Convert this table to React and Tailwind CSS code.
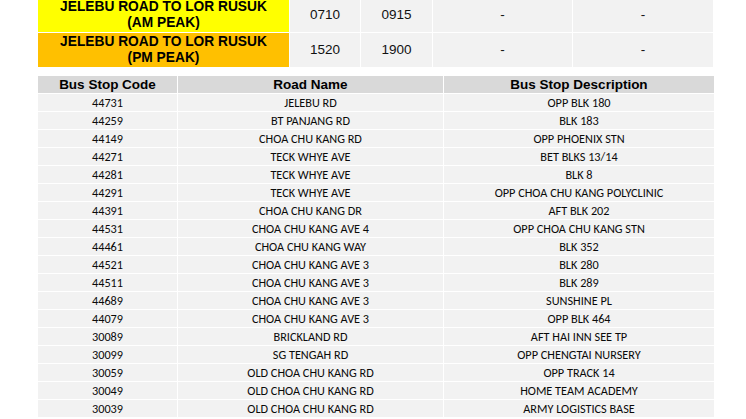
import React from "react";

const rows = [
  ["44731", "JELEBU RD", "OPP BLK 180"],
  ["44259", "BT PANJANG RD", "BLK 183"],
  ["44149", "CHOA CHU KANG RD", "OPP PHOENIX STN"],
  ["44271", "TECK WHYE AVE", "BET BLKS 13/14"],
  ["44281", "TECK WHYE AVE", "BLK 8"],
  ["44291", "TECK WHYE AVE", "OPP CHOA CHU KANG POLYCLINIC"],
  ["44391", "CHOA CHU KANG DR", "AFT BLK 202"],
  ["44531", "CHOA CHU KANG AVE 4", "OPP CHOA CHU KANG STN"],
  ["44461", "CHOA CHU KANG WAY", "BLK 352"],
  ["44521", "CHOA CHU KANG AVE 3", "BLK 280"],
  ["44511", "CHOA CHU KANG AVE 3", "BLK 289"],
  ["44689", "CHOA CHU KANG AVE 3", "SUNSHINE PL"],
  ["44079", "CHOA CHU KANG AVE 3", "OPP BLK 464"],
  ["30089", "BRICKLAND RD", "AFT HAI INN SEE TP"],
  ["30099", "SG TENGAH RD", "OPP CHENGTAI NURSERY"],
  ["30059", "OLD CHOA CHU KANG RD", "OPP TRACK 14"],
  ["30049", "OLD CHOA CHU KANG RD", "HOME TEAM ACADEMY"],
  ["30039", "OLD CHOA CHU KANG RD", "ARMY LOGISTICS BASE"],
];

const arial = { fontFamily: '"Liberation Sans", Arial, sans-serif' };
const calibri = { fontFamily: 'Carlito, Calibri, Lato, "Open Sans", sans-serif' };

function TopRow({ bg, title, start, end }) {
  return (
    <div className="grid grid-cols-[251px_70px_71px_139px_140px] gap-x-px h-[34px]">
      <div className={`${bg} flex flex-col items-center justify-center font-bold text-[13.75px] leading-[16px] text-black`}>
        <span>JELEBU ROAD TO LOR RUSUK</span>
        <span>{title}</span>
      </div>
      <div className="bg-[#f2f2f2] flex items-center justify-center text-[13.5px] text-[#111]">{start}</div>
      <div className="bg-[#f2f2f2] flex items-center justify-center text-[13.5px] text-[#111]">{end}</div>
      <div className="bg-[#f2f2f2] flex items-center justify-center text-[13.5px] text-[#111]">-</div>
      <div className="bg-[#f2f2f2] flex items-center justify-center text-[13.5px] text-[#111]">-</div>
    </div>
  );
}

export default function App() {
  return (
    <div className="w-[746px] h-[419px] overflow-hidden bg-white">
      <div className="pl-[38px] -mt-[2px] flex flex-col gap-y-px" style={arial}>
        <TopRow bg="bg-[#ffff00]" title="(AM PEAK)" start="0710" end="0915" />
        <TopRow bg="bg-[#ffc000]" title="(PM PEAK)" start="1520" end="1900" />
      </div>
      <div className="pl-[38px] mt-[9px] flex flex-col gap-y-px">
        <div className="grid grid-cols-[139px_265px_270px] gap-x-px h-[17px] font-bold text-[13.5px] leading-[17px] text-black" style={arial}>
          <div className="bg-[#d9d9d9] text-center">Bus Stop Code</div>
          <div className="bg-[#d9d9d9] text-center">Road Name</div>
          <div className="bg-[#d9d9d9] text-center">Bus Stop Description</div>
        </div>
        {rows.map((r) => (
          <div key={r[0]} className="grid grid-cols-[139px_265px_270px] gap-x-px h-[17px] text-[12.25px] leading-[17px] text-[#0a0a0a]" style={calibri}>
            <div className="bg-[#f2f2f2] text-center">{r[0]}</div>
            <div className="bg-[#f2f2f2] text-center">{r[1]}</div>
            <div className="bg-[#f2f2f2] text-center">{r[2]}</div>
          </div>
        ))}
      </div>
    </div>
  );
}
